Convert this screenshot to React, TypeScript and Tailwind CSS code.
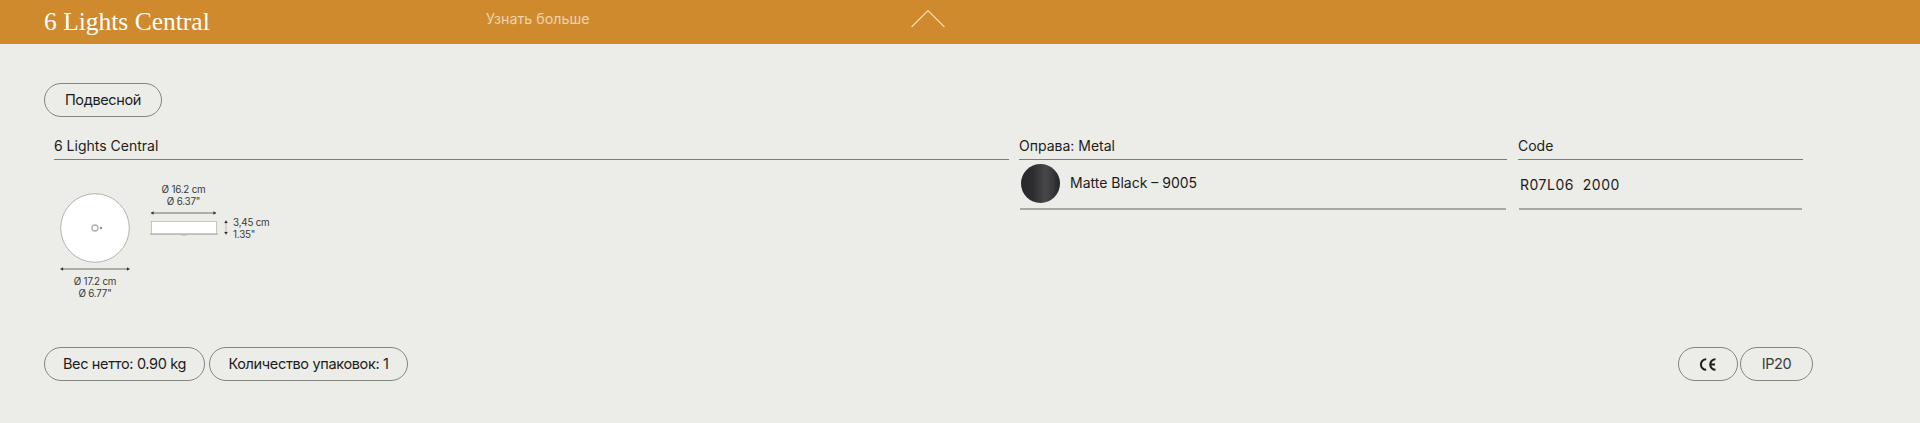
const sans = "font-['Inter','Liberation_Sans',sans-serif]";

function Pill({ children, className = "" }: { children: React.ReactNode; className?: string }) {
  return (
    <div className={`flex h-[34px] items-center justify-center rounded-[17px] border border-[#85857f] text-[14.5px] tracking-[-0.35px] text-[#1d1d1b] ${className}`}>
      {children}
    </div>
  );
}

function Arrow({ x1, y1, x2, y2, faint }: { x1: number; y1: number; x2: number; y2: number; faint?: boolean }) {
  const h = y1 === y2;
  return (
    <g stroke="#3a3a38" fill="#2a2a28">
      <line x1={x1} y1={y1} x2={x2} y2={y2} strokeWidth="0.7" opacity={faint ? 0.35 : 1} />
      {h ? (
        <>
          <path d={`M${x1} ${y1}l2.5 -1.6v3.2z`} strokeWidth="0.2" />
          <path d={`M${x2} ${y2}l-2.5 -1.6v3.2z`} strokeWidth="0.2" />
        </>
      ) : (
        <>
          <path d={`M${x1} ${y1}l-1.6 2.5h3.2z`} strokeWidth="0.2" />
          <path d={`M${x2} ${y2}l-1.6 -2.5h3.2z`} strokeWidth="0.2" />
        </>
      )}
    </g>
  );
}

function Drawing() {
  const t = { fontFamily: "Inter, 'Liberation Sans', sans-serif", fontSize: 9.8, fill: "#3a3a38", letterSpacing: -0.2 };
  return (
    <svg width="240" height="125" viewBox="0 0 240 125" className="block">
      <circle cx="51" cy="53" r="34.3" fill="#ffffff" stroke="#a3a3a0" strokeWidth="0.8" />
      <circle cx="51" cy="53" r="3" fill="#fff" stroke="#b0b0ac" strokeWidth="1.4" />
      <circle cx="57" cy="53" r="1.2" fill="#8a8a86" />
      <Arrow x1={16.5} y1={94} x2={85.5} y2={94} />
      <text x="51" y="110" textAnchor="middle" {...t}>Ø 17.2 cm</text>
      <text x="51" y="122" textAnchor="middle" {...t}>Ø 6.77"</text>
      <rect x="107.5" y="46.5" width="65" height="12.5" fill="#ffffff" stroke="#b4b4b0" strokeWidth="0.7" />
      <line x1="106" y1="59" x2="174" y2="59" stroke="#9a9a96" strokeWidth="0.8" />
      <line x1="137" y1="60" x2="143" y2="60" stroke="#b4b4b0" strokeWidth="0.9" />
      <Arrow x1={107} y1={38} x2={172} y2={38} />
      <text x="139.5" y="18" textAnchor="middle" {...t}>Ø 16.2 cm</text>
      <text x="139.5" y="30" textAnchor="middle" {...t}>Ø 6.37"</text>
      <Arrow x1={182} y1={45.5} x2={182} y2={59.5} faint />
      <text x="189" y="51" {...t}>3,45 cm</text>
      <text x="189" y="63" {...t}>1.35"</text>
    </svg>
  );
}

export default function App() {
  return (
    <div className={`flex min-h-[423px] flex-col bg-[#ecece8] ${sans}`}>
      <header className="flex h-[44px] items-center bg-[#cf8a2e] pl-[44px]">
        <div className="w-[442px] pb-[1px] font-['Liberation_Serif',serif] text-[25.5px] leading-none text-white">6 Lights Central</div>
        <div className="w-[424px] pb-[6px] text-[14.3px] leading-none text-[#ecd3ad]">Узнать больше</div>
        <svg width="36" height="20" viewBox="0 0 36 20" className="mb-[6px] block">
          <path d="M1.5 18L18 1.5L34.5 18" fill="none" stroke="#f3dcb8" strokeWidth="1.1" />
        </svg>
      </header>

      <div className="px-[44px] pt-[39px]">
        <Pill className="w-[118px]">Подвесной</Pill>
      </div>

      <div className="mt-[20px] flex pl-[54px]">
        <div className="w-[955px]">
          <div className="h-[17px] text-[14px] leading-[17px] text-[#1d1d1b]">6 Lights Central</div>
          <div className="mt-[5px] h-px bg-[#7d7d78]" />
          <div className="mt-[15px] -ml-[10px]"><Drawing /></div>
        </div>
        <div className="ml-[10px] w-[488px]">
          <div className="h-[17px] text-[14px] leading-[17px] text-[#1d1d1b]">Оправа: Metal</div>
          <div className="mt-[5px] h-px bg-[#7d7d78]" />
          <div className="mx-[1px] flex h-[50px] items-center border-b-2 border-[#a8a8a5] pb-[3px]">
            <div className="ml-[1px] mt-[1px] h-[39px] w-[39px] rounded-full bg-[linear-gradient(90deg,#28282a_0%,#2d2d30_30%,#48484a_62%,#3a3a3c_80%,#252527_100%)]" />
            <span className="ml-[10px] text-[14px] text-[#1d1d1b]">Matte Black – 9005</span>
          </div>
        </div>
        <div className="ml-[11px] w-[285px]">
          <div className="h-[17px] text-[14px] leading-[17px] text-[#1d1d1b]">Code</div>
          <div className="mt-[5px] h-px bg-[#7d7d78]" />
          <div className="mx-[1px] flex h-[50px] items-center border-b-2 border-[#a8a8a5] pl-[1px] pt-[1px]">
            <span className="whitespace-pre text-[14px] tracking-[0.5px] text-[#1d1d1b]">R07L06  2000</span>
          </div>
        </div>
      </div>

      <div className="mt-auto mb-[42px] flex items-center justify-between pl-[44px] pr-[107px]">
        <div className="flex gap-[4px]">
          <Pill className="w-[161px]">Вес нетто: 0.90 kg</Pill>
          <Pill className="w-[199px]">Количество упаковок: 1</Pill>
        </div>
        <div className="flex gap-[2px]">
          <Pill className="w-[60px]">
            <svg width="18" height="13" viewBox="0 0 18 13" fill="none" stroke="#1d1d1b" strokeWidth="2">
              <path d="M7.2 1.2A5.3 5.3 0 0 0 7.2 11.8" />
              <path d="M16.5 1.2A5.3 5.3 0 0 0 16.5 11.8M10.5 6.5H16" />
            </svg>
          </Pill>
          <Pill className="w-[73px] text-[#3a3a38]">IP20</Pill>
        </div>
      </div>
    </div>
  );
}
